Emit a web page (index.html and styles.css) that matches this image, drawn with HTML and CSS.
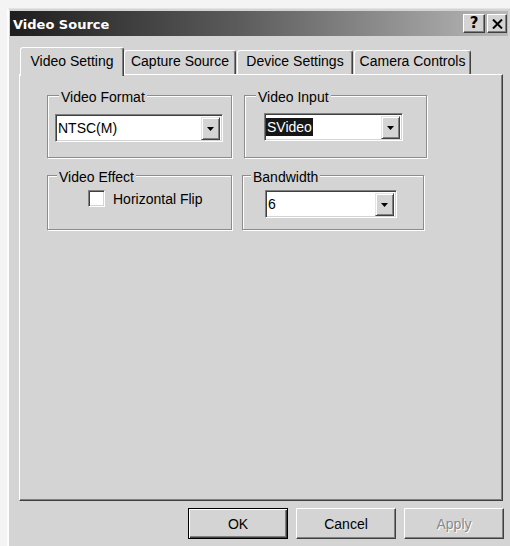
FILE: index.html
```html
<!DOCTYPE html>
<html lang="en">
<head>
<meta charset="utf-8">
<title>Video Source</title>
<link rel="stylesheet" href="styles.css">
</head>
<body>
<div class="window">
  <div class="titlebar">
    <span class="title">Video Source</span>
    <div class="caption-buttons">
      <button class="cap-btn cap-help">?</button>
      <button class="cap-btn cap-close">
        <svg width="11" height="10" viewBox="0 0 11 10"><path d="M1 0.5 L10 9.5 M10 0.5 L1 9.5" stroke="#000" stroke-width="2" fill="none"/></svg>
      </button>
    </div>
  </div>

  <div class="tabs">
    <div class="tab tab-active tab-setting">Video Setting</div>
    <div class="tab tab-capture">Capture Source</div>
    <div class="tab tab-device">Device Settings</div>
    <div class="tab tab-camera">Camera Controls</div>
  </div>

  <div class="panel">
    <div class="row row-top">
      <div class="group group-format">
        <span class="group-label">Video Format</span>
        <div class="combo combo-format">
          <span class="combo-text">NTSC(M)</span>
          <span class="combo-btn"><svg width="7" height="4" viewBox="0 0 7 4"><polygon points="0,0 7,0 3.5,4" fill="#000"/></svg></span>
        </div>
      </div>
      <div class="group group-input">
        <span class="group-label">Video Input</span>
        <div class="combo combo-input">
          <span class="combo-text"><span class="selected">SVideo</span></span>
          <span class="combo-btn"><svg width="7" height="4" viewBox="0 0 7 4"><polygon points="0,0 7,0 3.5,4" fill="#000"/></svg></span>
        </div>
      </div>
    </div>
    <div class="row row-bottom">
      <div class="group group-effect">
        <span class="group-label">Video Effect</span>
        <label class="check">
          <span class="check-box"></span>
          <span class="check-text">Horizontal Flip</span>
        </label>
      </div>
      <div class="group group-band">
        <span class="group-label">Bandwidth</span>
        <div class="combo combo-band">
          <span class="combo-text">6</span>
          <span class="combo-btn"><svg width="7" height="4" viewBox="0 0 7 4"><polygon points="0,0 7,0 3.5,4" fill="#000"/></svg></span>
        </div>
      </div>
    </div>
  </div>

  <div class="actions">
    <button class="btn btn-default">OK</button>
    <button class="btn">Cancel</button>
    <button class="btn btn-disabled">Apply</button>
  </div>
</div>
</body>
</html>
```

FILE: styles.css
```css
html, body {
  margin: 0;
  padding: 0;
}

body {
  background: #f4f4f4;
  font-family: "Liberation Sans", Arial, sans-serif;
  font-size: 14px;
  color: #000;
  overflow: hidden;
}

/* dialog frame */
.window {
  box-sizing: border-box;
  width: 503px;
  height: 538px;
  margin: 8px 0 0 7px;
  padding: 2px 2px 0 1px;
  background: #d4d4d4;
  border-top: 1px solid #e4e4e4;
  border-left: 2px solid #fdfdfd;
}

/* caption */
.titlebar {
  height: 25px;
  display: flex;
  align-items: center;
  justify-content: space-between;
  padding: 0 1px 0 3px;
  background: linear-gradient(to right, #1e1e1e 0%, #5a5a5a 45%, #b8b8b8 100%);
}

.title {
  font-family: "DejaVu Sans", Verdana, sans-serif;
  font-weight: bold;
  font-size: 13px;
  color: #fff;
  line-height: 15px;
  padding-top: 1px;
}

.caption-buttons {
  display: flex;
  gap: 2px;
}

.cap-btn {
  box-sizing: border-box;
  height: 19px;
  padding: 0;
  margin: 0;
  display: flex;
  align-items: center;
  justify-content: center;
  background: #d4d4d4;
  border: 1px solid;
  border-color: #fff #404040 #404040 #fff;
  box-shadow: inset -1px -1px 0 #808080;
  font-family: "DejaVu Sans", Verdana, sans-serif;
  font-weight: bold;
  font-size: 15px;
  line-height: 15px;
  color: #000;
}

.cap-help { width: 22px; }
.cap-close { width: 20px; }

/* tab strip */
.tabs {
  display: flex;
  align-items: flex-end;
  height: 27px;
  margin: 11px 0 0 10px;
}

.tab {
  box-sizing: border-box;
  height: 24px;
  padding-top: 2px;
  line-height: 16px;
  text-align: center;
  background: #d4d4d4;
  border-top: 1px solid #fff;
  border-left: 1px solid #fff;
  border-right: 1px solid #404040;
  border-radius: 3px 3px 0 0;
  box-shadow: inset -1px 0 0 #808080;
  white-space: nowrap;
}

.tab-active {
  position: relative;
  z-index: 1;
  height: 29px;
  padding-top: 5px;
  margin-bottom: -2px;
}

.tab-setting { width: 104px; }
.tab-capture { width: 112px; }
.tab-device { width: 116px; margin-left: 1px; }
.tab-camera { width: 117px; margin-left: 1px; }

/* tab page */
.panel {
  box-sizing: border-box;
  width: 484px;
  height: 427px;
  margin-left: 9px;
  padding: 20px 0 0 27px;
  border-top: 1px solid #fff;
  border-left: 1px solid #fff;
  border-right: 1px solid #404040;
  border-bottom: 1px solid #404040;
  box-shadow: inset -1px -1px 0 #808080;
}

.row {
  display: flex;
}

.row-top {
  gap: 12px;
  height: 63px;
}

.row-bottom {
  gap: 10px;
  height: 55px;
  margin-top: 17px;
}

/* etched group box */
.group {
  position: relative;
  box-sizing: border-box;
  height: 100%;
  border: 1px solid #8c8c8c;
  box-shadow: inset 1px 1px 0 #fff, 1px 1px 0 #fff;
}

.group-format { width: 185px; }
.group-input { width: 183px; }
.group-effect { width: 185px; }
.group-band { width: 182px; }

.group-label {
  position: absolute;
  top: -7px;
  left: 11px;
  padding: 0 2px;
  line-height: 16px;
  background: #d4d4d4;
  white-space: nowrap;
}

.group-effect .group-label { left: 9px; }
.group-band .group-label { left: 8px; }

/* drop-down list */
.combo {
  box-sizing: border-box;
  height: 28px;
  display: flex;
  align-items: stretch;
  background: #fff;
  border: 1px solid;
  border-color: #808080 #fff #fff #808080;
  box-shadow: inset 1px 1px 0 #404040, inset -1px -1px 0 #d4d4d4;
}

.combo-format { width: 168px; margin: 18px 0 0 7px; }
.combo-input { width: 139px; margin: 17px 0 0 19px; }
.combo-band { width: 132px; margin: 14px 0 0 22px; }

.combo-text {
  flex: 1;
  display: flex;
  align-items: center;
  padding-left: 2px;
  white-space: nowrap;
}

.selected {
  background: #161616;
  color: #fff;
  line-height: 18px;
  padding: 0 1px;
  margin-left: -1px;
}

.combo-btn {
  box-sizing: border-box;
  width: 19px;
  margin: 2px 2px 1px 0;
  display: flex;
  align-items: center;
  justify-content: center;
  background: #d4d4d4;
  border: 1px solid;
  border-color: #e4e4e4 #404040 #404040 #e4e4e4;
  box-shadow: inset 1px 1px 0 #fff, inset -1px -1px 0 #808080;
}

/* check box */
.check {
  display: flex;
  align-items: center;
  margin: 14px 0 0 40px;
}

.check-box {
  box-sizing: border-box;
  width: 17px;
  height: 17px;
  background: #fff;
  border: 1px solid;
  border-color: #808080 #fff #fff #808080;
  box-shadow: inset 1px 1px 0 #404040, inset -1px -1px 0 #d4d4d4;
}

.check-text {
  margin-left: 8px;
  line-height: 16px;
}

/* dialog buttons */
.actions {
  display: flex;
  justify-content: flex-end;
  gap: 8px;
  margin-top: 7px;
  padding-right: 4px;
}

.btn {
  box-sizing: border-box;
  width: 100px;
  height: 31px;
  margin: 0;
  padding: 0;
  font-family: "Liberation Sans", Arial, sans-serif;
  font-size: 14px;
  color: #000;
  background: #d4d4d4;
  border: 1px solid;
  border-color: #fff #404040 #404040 #fff;
  box-shadow: inset -1px -1px 0 #808080;
}

.btn-default {
  border: 1px solid #000;
  box-shadow: inset 1px 1px 0 #fff, inset -1px -1px 0 #404040, inset -2px -2px 0 #808080;
}

.btn-disabled {
  color: #8a8a8a;
  text-shadow: 1px 1px 0 #fff;
}
```
